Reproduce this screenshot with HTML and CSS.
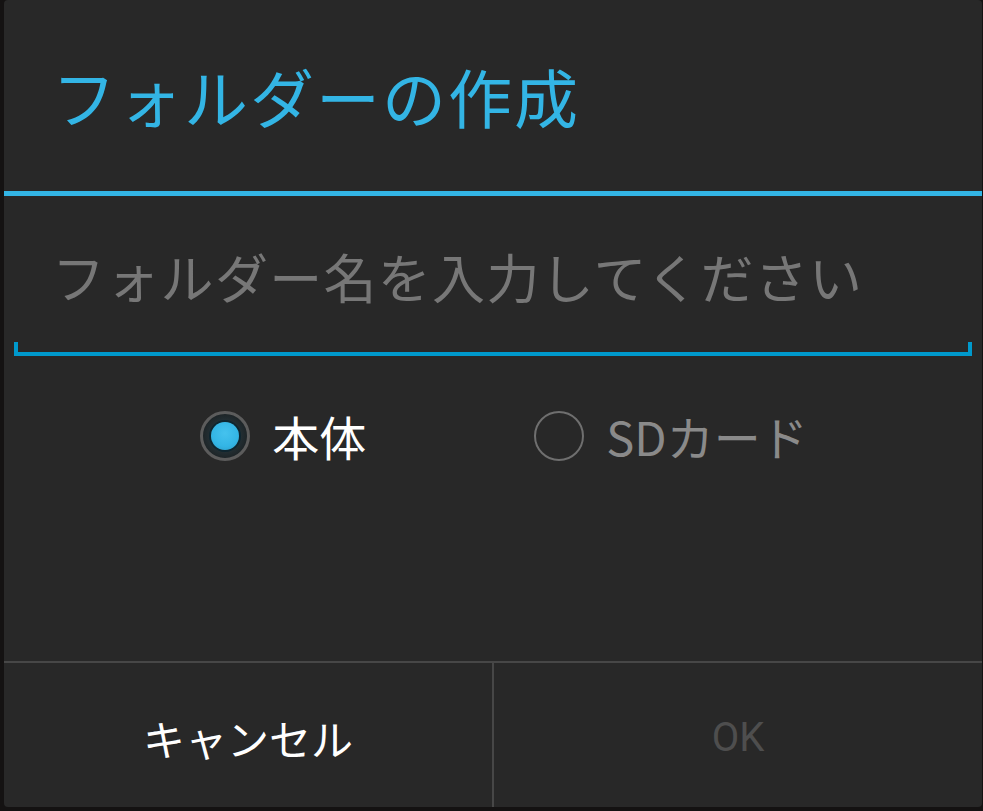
FILE: index.html
```html
<!DOCTYPE html>
<html lang="ja">
<head>
    <title>フォルダーの作成</title>
    <link rel="stylesheet" href="styles.css">
</head>
<body>
    <!-- フォルダー作成ダイアログ -->
    <div class="dialog">
        <div class="dialog-title">フォルダーの作成</div>
        <div class="title-divider"></div>
        <div class="dialog-body">
            <div class="name-field">
                <span class="placeholder">フォルダー名を入力してください</span>
            </div>
            <div class="radio-group">
                <div class="radio-item checked">
                    <span class="radio-mark"><span class="radio-dot"></span></span>
                    <span class="radio-label">本体</span>
                </div>
                <div class="radio-item">
                    <span class="radio-mark"></span>
                    <span class="radio-label">SDカード</span>
                </div>
            </div>
        </div>
        <div class="button-bar">
            <div class="dialog-btn">キャンセル</div>
            <div class="dialog-btn disabled">OK</div>
        </div>
    </div>
</body>
</html>
```

FILE: styles.css
```css
body {
    margin: 0;
    padding: 0;
    background-color: #141212;
    font-family: "Noto Sans CJK JP", "Roboto", sans-serif;
}

.dialog {
    margin-left: 4px;
    width: 978px;
    height: 807px;
    background-color: #282828;
    border-radius: 4px;
    display: flex;
    flex-direction: column;
}

.dialog-title {
    height: 191px;
    box-sizing: border-box;
    padding-left: 48px;
    padding-top: 50px;
    color: #33b5e5;
    font-size: 64px;
    letter-spacing: 2px;
    line-height: 90px;
}

.title-divider {
    height: 5px;
    background-color: #33b5e5;
}

.dialog-body {
    flex: 1;
}

.name-field {
    margin: 0 10px 0 10px;
    height: 160px;
    box-sizing: border-box;
    padding: 44px 0 0 38px;
    position: relative;
    border-bottom: 4px solid #0099cc;
}

.name-field::before,
.name-field::after {
    content: "";
    position: absolute;
    bottom: 0;
    width: 4px;
    height: 10px;
    background-color: #0099cc;
}

.name-field::before {
    left: 0;
}

.name-field::after {
    right: 0;
}

.placeholder {
    color: #777;
    font-size: 53px;
    letter-spacing: 1.3px;
    line-height: 72px;
}

.radio-group {
    display: flex;
    justify-content: center;
    gap: 168px;
    padding-top: 50px;
    padding-left: 22px;
}

.radio-item {
    display: flex;
    align-items: center;
    gap: 22px;
}

.radio-mark {
    width: 50px;
    height: 50px;
    box-sizing: border-box;
    border-radius: 50%;
    border: 2px solid #6f6f6f;
    display: flex;
    align-items: center;
    justify-content: center;
}

.radio-item.checked .radio-mark {
    border: 3px solid #5c5c5c;
    background: radial-gradient(circle, #2f4750 0%, #1e2528 70%);
}

.radio-dot {
    width: 28px;
    height: 28px;
    border-radius: 50%;
    background: radial-gradient(circle at 50% 40%, #45c2ee 0%, #33b5e5 60%, #2a9ac4 100%);
    box-shadow: 0 0 0 2px #0e2630;
}

.radio-label {
    color: #8a8a8a;
    font-size: 47px;
    line-height: 60px;
}

.radio-item.checked .radio-label {
    color: #ffffff;
}

.button-bar {
    height: 144px;
    border-top: 2px solid #474747;
    display: flex;
}

.dialog-btn {
    flex: 1;
    display: flex;
    align-items: center;
    justify-content: center;
    color: #ffffff;
    font-size: 42px;
    padding-top: 4px;
}

.dialog-btn + .dialog-btn {
    border-left: 2px solid #474747;
}

.dialog-btn.disabled {
    color: #4e4e4e;
    font-family: "Roboto", sans-serif;
    font-size: 40px;
}
```
